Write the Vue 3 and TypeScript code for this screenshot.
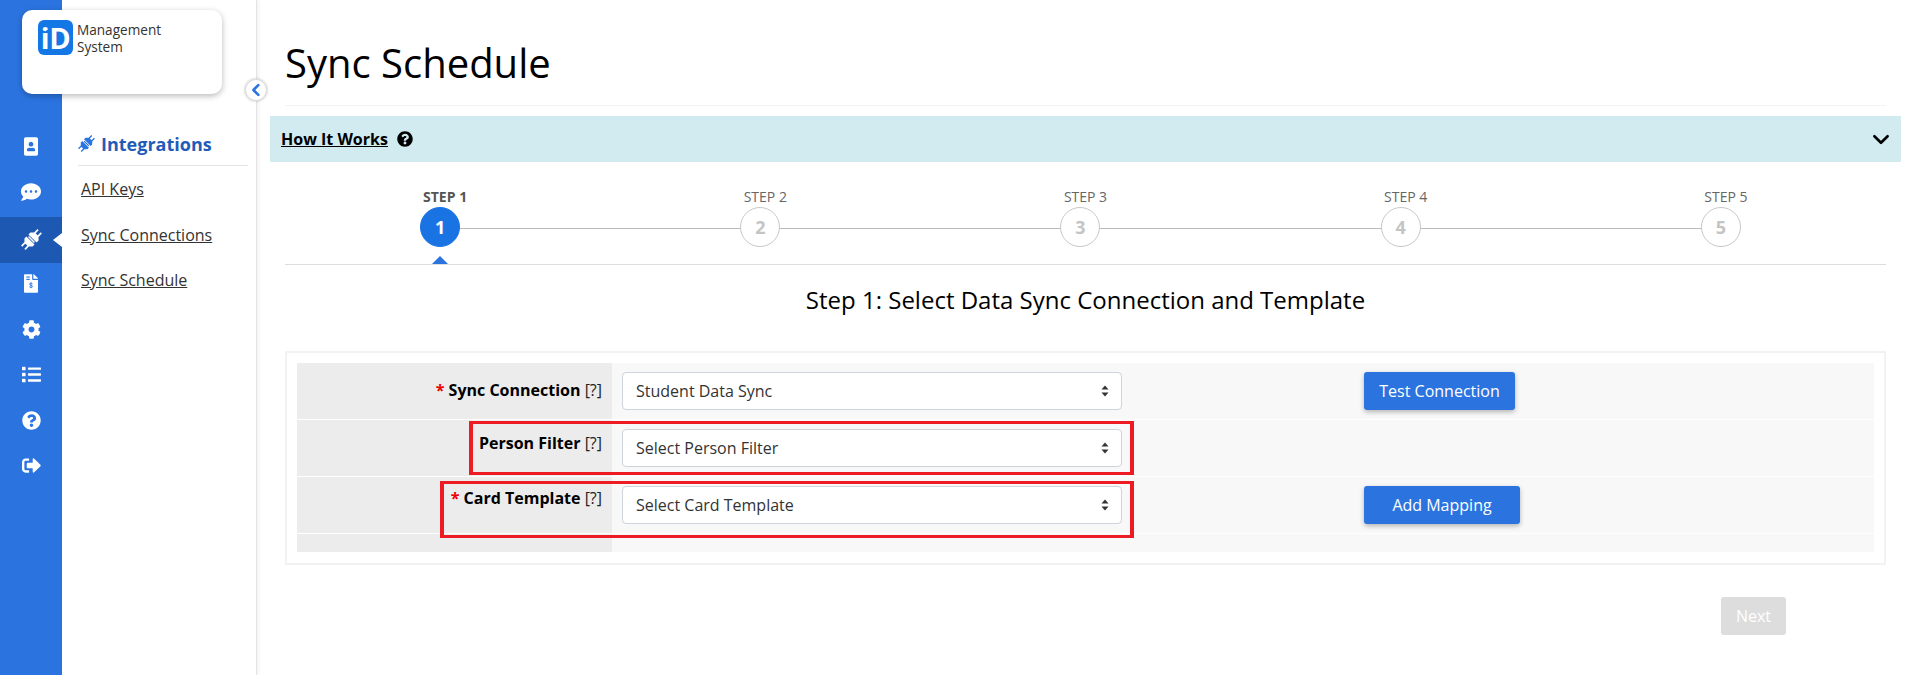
<script setup lang="ts">
const railIcons = [
  { box: '0 0 384 512', w: 14, h: 19, d: 'M336 0H48C21.5 0 0 21.5 0 48v416c0 26.5 21.5 48 48 48h288c26.5 0 48-21.5 48-48V48c0-26.5-21.5-48-48-48zM192 128c35.3 0 64 28.7 64 64s-28.7 64-64 64-64-28.7-64-64 28.7-64 64-64zm112 236.8c0 10.6-10 19.2-22.4 19.2H102.4C90 384 80 375.4 80 364.8v-19.2c0-31.8 30.1-57.6 67.2-57.6h5c12.3 5.1 25.7 8 39.8 8s27.6-2.9 39.8-8h5c37.1 0 67.2 25.8 67.2 57.6v19.2z' },
  { box: '0 0 512 512', w: 20, h: 20, d: 'M256 32C114.6 32 0 125.1 0 240c0 49.6 21.4 95 57 130.7C44.5 421.1 2.7 466 2.2 466.5c-2.2 2.3-2.8 5.7-1.5 8.7S4.8 480 8 480c66.3 0 116-31.8 140.6-51.4 32.7 12.3 69 19.4 107.4 19.4 141.4 0 256-93.1 256-208S397.4 32 256 32zM128 272c-17.7 0-32-14.3-32-32s14.3-32 32-32 32 14.3 32 32-14.3 32-32 32zm128 0c-17.7 0-32-14.3-32-32s14.3-32 32-32 32 14.3 32 32-14.3 32-32 32zm128 0c-17.7 0-32-14.3-32-32s14.3-32 32-32 32 14.3 32 32-14.3 32-32 32z' },
  { plug: true, w: 21, h: 21 },
  { dollar: true, box: '0 0 384 512', w: 14, h: 19, d: 'M377 105L279.1 7c-4.5-4.5-10.6-7-17-7H256v128h128v-6.1c0-6.3-2.5-12.4-7-16.9zm-153 31V0H24C10.7 0 0 10.7 0 24v464c0 13.3 10.7 24 24 24h336c13.3 0 24-10.7 24-24V160H248c-13.2 0-24-10.8-24-24z' },
  { box: '0 0 512 512', w: 19, h: 19, d: 'M487.4 315.7l-42.6-24.6c4.3-23.2 4.3-47 0-70.2l42.6-24.6c4.9-2.8 7.1-8.6 5.5-14-11.1-35.6-30-67.8-54.7-94.6-3.8-4.1-10-5.1-14.8-2.3L380.8 110c-17.9-15.4-38.5-27.3-60.8-35.1V25.8c0-5.6-3.9-10.5-9.4-11.7-36.7-8.2-74.3-7.8-109.2 0-5.5 1.2-9.4 6.1-9.4 11.7V75c-22.2 7.9-42.8 19.8-60.8 35.1L88.7 85.5c-4.9-2.8-11-1.9-14.8 2.3-24.7 26.7-43.6 58.9-54.7 94.6-1.7 5.4.6 11.2 5.5 14L67.3 221c-4.3 23.2-4.3 47 0 70.2l-42.6 24.6c-4.9 2.8-7.1 8.6-5.5 14 11.1 35.6 30 67.8 54.7 94.6 3.8 4.1 10 5.1 14.8 2.3l42.6-24.6c17.9 15.4 38.5 27.3 60.8 35.1v49.2c0 5.6 3.9 10.5 9.4 11.7 36.7 8.2 74.3 7.8 109.2 0 5.5-1.2 9.4-6.1 9.4-11.7v-49.2c22.2-7.9 42.8-19.8 60.8-35.1l42.6 24.6c4.9 2.8 11 1.9 14.8-2.3 24.7-26.7 43.6-58.9 54.7-94.6 1.5-5.5-.7-11.3-5.6-14.1zM256 336c-44.1 0-80-35.9-80-80s35.9-80 80-80 80 35.9 80 80-35.9 80-80 80z' },
  { box: '0 0 512 512', w: 19, h: 19, d: 'M80 368H16a16 16 0 0 0-16 16v64a16 16 0 0 0 16 16h64a16 16 0 0 0 16-16v-64a16 16 0 0 0-16-16zm0-320H16A16 16 0 0 0 0 64v64a16 16 0 0 0 16 16h64a16 16 0 0 0 16-16V64a16 16 0 0 0-16-16zm0 160H16a16 16 0 0 0-16 16v64a16 16 0 0 0 16 16h64a16 16 0 0 0 16-16v-64a16 16 0 0 0-16-16zm416 176H176a16 16 0 0 0-16 16v32a16 16 0 0 0 16 16h320a16 16 0 0 0 16-16v-32a16 16 0 0 0-16-16zm0-320H176a16 16 0 0 0-16 16v32a16 16 0 0 0 16 16h320a16 16 0 0 0 16-16V80a16 16 0 0 0-16-16zm0 160H176a16 16 0 0 0-16 16v32a16 16 0 0 0 16 16h320a16 16 0 0 0 16-16v-32a16 16 0 0 0-16-16z' },
  { box: '0 0 512 512', w: 19, h: 19, d: 'M504 256c0 136.997-111.043 248-248 248S8 392.997 8 256C8 119.083 119.043 8 256 8s248 111.083 248 248zM262.655 90c-54.497 0-89.255 22.957-116.549 63.758-3.536 5.286-2.353 12.415 2.715 16.258l34.699 26.31c5.205 3.947 12.621 3.008 16.665-2.122 17.864-22.658 30.113-35.797 57.303-35.797 20.429 0 45.698 13.148 45.698 32.958 0 14.976-12.363 22.667-32.534 33.976C247.128 238.528 216 254.941 216 296v4c0 6.627 5.373 12 12 12h56c6.627 0 12-5.373 12-12v-1.333c0-28.462 83.186-29.647 83.186-106.667 0-58.002-60.165-102-116.531-102zM256 338c-25.365 0-46 20.635-46 46 0 25.364 20.635 46 46 46s46-20.636 46-46c0-25.365-20.635-46-46-46z' },
  { box: '0 0 512 512', w: 19, h: 19, d: 'M497 273L329 441c-15 15-41 4.5-41-17v-96H152c-13.3 0-24-10.7-24-24v-96c0-13.3 10.7-24 24-24h136V88c0-21.4 25.9-32 41-17l168 168c9.3 9.4 9.3 24.6 0 34zM192 436v-40c0-6.6-5.4-12-12-12H96c-17.7 0-32-14.3-32-32V160c0-17.7 14.3-32 32-32h84c6.6 0 12-5.4 12-12V76c0-6.6-5.4-12-12-12H96c-53 0-96 43-96 96v192c0 53 43 96 96 96h84c6.6 0 12-5.4 12-12z' },
]
const questionPath = railIcons[6].d as string
const plugPath = 'M1 9h4.500v1.600H1zM1 13.400h4.500V15H1zM5 9.500 8 6.500h2.600v11H8L5 14.500zM13.400 6.500H16l3 3v5l-3 3h-2.600zM18.500 9H23v1.600h-4.500zM18.500 13.400H23V15h-4.500zM11.300 8h1.400v8h-1.400z'
const links = ['API Keys', 'Sync Connections', 'Sync Schedule']
const steps = [1, 2, 3, 4, 5]
const rows = [
  { cls: 'row-first', req: true, label: 'Sync Connection', value: 'Student Data Sync', action: 'Test Connection' },
  { cls: 'row-second', req: false, label: 'Person Filter', value: 'Select Person Filter', action: '' },
  { cls: 'row-third', req: true, label: 'Card Template', value: 'Select Card Template', action: 'Add Mapping' },
]
</script>

<template>
  <div class="page">
    <aside class="rail">
      <ul class="rail-list">
        <li v-for="(ic, i) in railIcons" :key="i" class="rail-item" :class="{ active: i === 2 }">
          <svg v-if="ic.plug" viewBox="2 2 20 20" :width="ic.w" :height="ic.h" fill="#fff">
            <path :d="plugPath" transform="rotate(-45 12 12)" />
          </svg>
          <svg v-else :viewBox="ic.box" :width="ic.w" :height="ic.h" fill="#fff">
            <path :d="ic.d" />
            <g v-if="ic.dollar">
              <rect x="64" y="64" width="96" height="30" fill="#2b74e0" />
              <rect x="64" y="128" width="96" height="30" fill="#2b74e0" />
              <path d="M236 266c-8-14-24-20-44-20-22 0-40 10-40 28 0 40 84 22 84 62 0 18-18 28-42 28-22 0-38-6-46-20M192 226v158" fill="none" stroke="#2b74e0" stroke-width="24" />
            </g>
          </svg>
        </li>
      </ul>
    </aside>

    <nav class="panel">
      <h2 class="panel-title">
        <svg viewBox="2 2 20 20" width="17" height="17" fill="#2b74e0">
          <path :d="plugPath" transform="rotate(-45 12 12)" />
        </svg>
        <span>Integrations</span>
      </h2>
      <a v-for="l in links" :key="l" class="panel-link" href="#">{{ l }}</a>
    </nav>

    <div class="logo-card">
      <span class="logo-mark">iD</span>
      <span class="logo-text">Management<br />System</span>
    </div>
    <button class="collapse" type="button" aria-label="Collapse">
      <svg viewBox="0 0 12 12" width="14" height="14" fill="none" stroke="#2b74e0" stroke-width="2.200" stroke-linecap="round" stroke-linejoin="round"><path d="M8 1.800 3.800 6 8 10.200" /></svg>
    </button>

    <main class="main">
      <h1 class="title">Sync Schedule</h1>
      <section class="how">
        <span class="how-left">
          <a class="how-link" href="#">How It Works</a>
          <svg viewBox="0 0 512 512" width="16" height="16" fill="#000"><path :d="questionPath" /></svg>
        </span>
        <svg viewBox="0 0 16 10" width="18" height="11" fill="none" stroke="#000" stroke-width="2.400" stroke-linecap="round" stroke-linejoin="round"><path d="M2 2l6 6 6-6" /></svg>
      </section>

      <div class="content">
        <ol class="stepper">
          <li v-for="s in steps" :key="s" class="step" :class="{ current: s === 1 }">
            <span class="step-label">STEP {{ s }}</span>
            <span class="step-circle">{{ s }}</span>
          </li>
        </ol>

        <h3 class="step-heading">Step 1: Select Data Sync Connection and Template</h3>

        <form class="form-box" @submit.prevent>
          <div v-for="r in rows" :key="r.label" class="form-row" :class="r.cls">
            <div class="form-label">
              <span v-if="r.req" class="req">*&nbsp;</span><b>{{ r.label }}</b>&nbsp;<span class="hint">[?]</span>
            </div>
            <div class="form-value">
              <div class="select-wrap">
                <select class="select"><option>{{ r.value }}</option></select>
                <svg class="select-arrow" viewBox="0 0 8 12" width="8" height="12" fill="#333"><path d="M4 0.500 7.500 4.500H0.500zM4 11.500 0.500 7.500h7z" /></svg>
              </div>
              <button v-if="r.action" class="btn" :class="{ wide: r.action === 'Add Mapping' }" type="button">{{ r.action }}</button>
            </div>
          </div>
          <div class="form-row row-end"><div class="form-label"></div><div class="form-value"></div></div>
          <div class="callout callout-person"></div>
          <div class="callout callout-card"></div>
        </form>

        <div class="actions"><button class="next" type="button" disabled>Next</button></div>
      </div>
    </main>
  </div>
</template>

<style>
html, body { margin: 0; background: #fff; }
</style>

<style scoped>
* { box-sizing: border-box; }
.page {
  position: relative;
  display: flex;
  height: 675px;
  overflow: hidden;
  font-family: "Open Sans", "Liberation Sans", sans-serif;
  color: #000;
  background: #fff;
}
.rail { width: 62px; flex: none; background: #2b74e0; padding-top: 124px; }
.rail-list { list-style: none; margin: 0; padding: 0; }
.rail-item {
  position: relative;
  height: 45.500px;
  display: flex;
  align-items: center;
  justify-content: center;
}
.rail-item.active {
  height: 46px;
  margin-top: 1.500px;
  margin-bottom: -1.500px;
  background: #1d58b3;
}
.rail-item.active::after {
  content: "";
  position: absolute;
  right: 0;
  top: 50%;
  margin-top: -7px;
  border: 7px solid transparent;
  border-right: 9px solid #fff;
  border-left: 0;
}
.panel {
  width: 195px;
  flex: none;
  border-right: 1px solid #e4e4e4;
  box-shadow: 1px 0 4px rgba(0, 0, 0, 0.08);
  padding: 130px 8px 0 16px;
}
.panel-title {
  display: flex;
  align-items: center;
  gap: 6px;
  margin: 0;
  height: 36px;
  padding-bottom: 8px;
  border-bottom: 1px solid #e3e3e3;
  font-size: 18px;
  font-weight: 700;
  color: #1f5cb8;
}
.panel-link {
  display: block;
  margin: 0 0 0 3px;
  padding-top: 11px;
  height: 45.500px;
  font-size: 16px;
  line-height: 24px;
  color: #333;
}
.logo-card {
  position: absolute;
  left: 22px;
  top: 10px;
  width: 200px;
  height: 84px;
  padding: 10px 16px;
  display: flex;
  align-items: flex-start;
  gap: 4px;
  background: #fff;
  border-radius: 10px;
  box-shadow: 0 2px 6px rgba(0, 0, 0, 0.28);
}
.logo-mark {
  position: relative;
  width: 35px;
  height: 35px;
  flex: none;
  border-radius: 6px;
  background: #1477e6;
  color: #fff;
  font-size: 29px;
  line-height: 35px;
  font-weight: 700;
  text-align: center;
  letter-spacing: -0.500px;
}
.logo-mark::after {
  content: "";
  position: absolute;
  left: 8px;
  top: 10px;
  width: 3px;
  height: 3px;
  border-radius: 50%;
  background: #1477e6;
}
.logo-text { font-size: 13.600px; line-height: 17px; color: #333; padding-top: 1px; }
.collapse {
  position: absolute;
  left: 245px;
  top: 79px;
  width: 22px;
  height: 22px;
  padding: 0;
  border: 1px solid #ddd;
  border-radius: 50%;
  background: #fff;
  box-shadow: 0 0 3px rgba(0, 0, 0, 0.25);
  display: flex;
  align-items: center;
  justify-content: center;
}
.main { flex: 1; min-width: 0; padding: 0 10px 0 13px; }
.title {
  margin: 0 0 0 15px;
  width: 1601px;
  height: 106px;
  border-bottom: 1px solid #f3f3f3;
  padding-top: 38px;
  font-size: 40px;
  line-height: 50px;
  font-weight: 400;
}
.how {
  margin-top: 10px;
  height: 46px;
  background: #d1ebf0;
  display: flex;
  align-items: center;
  justify-content: space-between;
  padding: 0 11px;
}
.how-left { display: flex; align-items: center; gap: 9px; }
.how-link { font-size: 16px; font-weight: 700; color: #000; }
.content { width: 1601px; margin-left: 15px; }
.stepper {
  list-style: none;
  margin: 0;
  padding: 25px 0 0;
  height: 103px;
  display: grid;
  grid-template-columns: repeat(5, 1fr);
  border-bottom: 1px solid #ddd;
}
.step { position: relative; display: flex; flex-direction: column; align-items: center; }
.step-label { height: 20px; font-size: 14px; line-height: 20px; color: #666; }
.step.current .step-label { font-weight: 700; color: #555; }
.step-circle {
  position: relative;
  z-index: 1;
  width: 40px;
  height: 40px;
  margin-right: 10px;
  border: 1px solid #c8c8c8;
  border-radius: 50%;
  background: #fff;
  color: #c4c4c4;
  font-size: 18px;
  font-weight: 700;
  line-height: 38px;
  text-align: center;
}
.step:not(:last-child)::after {
  content: "";
  position: absolute;
  top: 41px;
  left: calc(50% - 5px);
  width: 100%;
  border-top: 1px solid #bbb;
}
.step.current .step-circle { background: #1a73e3; border-color: #1a73e3; color: #fff; }
.step.current::before {
  content: "";
  position: absolute;
  left: calc(50% - 13px);
  top: 69px;
  border-left: 8px solid transparent;
  border-right: 8px solid transparent;
  border-bottom: 8px solid #2b74e0;
}
.step-heading {
  margin: 0;
  height: 86px;
  padding-top: 18px;
  font-size: 24px;
  line-height: 33px;
  font-weight: 400;
  text-align: center;
}
.form-box {
  position: relative;
  height: 214px;
  border: 2px solid #f2f2f2;
  padding: 10px;
}
.form-row {
  display: grid;
  grid-template-columns: 315px 1fr;
  height: 57px;
  border-bottom: 1px solid #fff;
}
.row-end { height: 18px; border-bottom: 0; }
.form-label {
  background: #ececec;
  text-align: right;
  padding-right: 10px;
  font-size: 16px;
  line-height: 24px;
}
.row-first .form-label { padding-top: 15px; }
.row-second .form-label { padding-top: 11px; }
.row-third .form-label { padding-top: 9px; }
.form-label b { font-weight: 700; }
.req { color: #e00; font-weight: 700; }
.hint { color: #222; }
.form-value {
  background: #f8f8f8;
  display: flex;
  align-items: flex-start;
  padding: 9px 0 0 10px;
}
.select-wrap { position: relative; width: 500px; height: 38px; flex: none; }
.select {
  display: block;
  width: 100%;
  height: 100%;
  appearance: none;
  border: 1px solid #ced4da;
  border-radius: 4px;
  background: #fff;
  padding: 0 13px;
  font-family: inherit;
  font-size: 16px;
  color: #333;
}
.select-arrow { position: absolute; right: 13px; top: 13px; }
.btn {
  margin-left: 242px;
  height: 38px;
  width: 151px;
  border: 0;
  border-radius: 3px;
  background: #2b74e0;
  color: #fff;
  font-family: inherit;
  font-size: 16px;
  box-shadow: 0 2px 5px rgba(0, 0, 0, 0.28);
}
.btn.wide { width: 156px; }
.callout {
  position: absolute;
  border-style: solid;
  border-color: #ed1c24;
  border-width: 3px 4px;
  pointer-events: none;
}
.callout-person { left: 182px; top: 68px; width: 665px; height: 54px; }
.callout-card { left: 153px; top: 128px; width: 694px; height: 57px; }
.actions { display: flex; justify-content: flex-end; padding: 32px 100px 0 0; }
.next {
  width: 65px;
  height: 38px;
  border: 0;
  border-radius: 3px;
  background: #ddd;
  color: #fff;
  font-family: inherit;
  font-size: 16px;
}
</style>
